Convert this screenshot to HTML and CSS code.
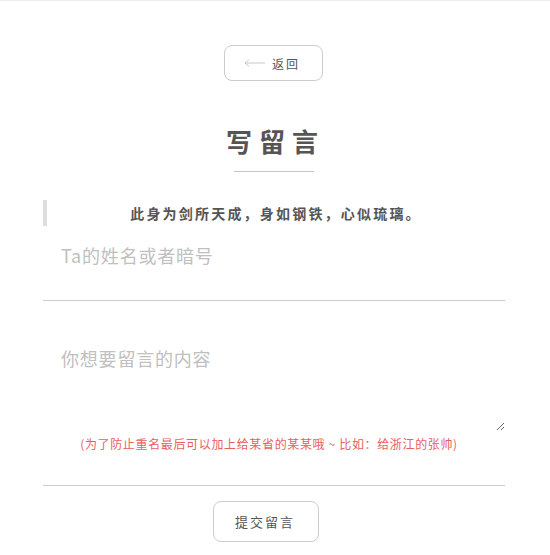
FILE: index.html
```html
<!DOCTYPE html>
<html lang="zh">
<head>
<meta charset="utf-8">
<link rel="stylesheet" href="styles.css">
</head>
<body>
<div class="page">
  <div class="top">
    <a class="back-btn" href="#">
      <svg class="arrow" width="22" height="10" viewBox="0 0 22 10"><path d="M1 5H21M1 5L5 1.5M1 5L5 8.5" fill="none" stroke="#c8c8c8" stroke-width="1"/></svg>
      <span>返回</span>
    </a>
  </div>
  <h1 class="title">写留言</h1>
  <div class="title-line"></div>
  <form class="form">
    <blockquote class="quote">此身为剑所天成，身如钢铁，心似琉璃。</blockquote>
    <input class="name-input" type="text" placeholder="Ta的姓名或者暗号">
    <textarea class="content-input" placeholder="你想要留言的内容"></textarea>
    <p class="hint">(为了防止重名最后可以加上给某省的某某哦 ~ 比如：给浙江的张帅)</p>
    <div class="divider"></div>
    <div class="actions">
      <button class="submit-btn" type="button">提交留言</button>
    </div>
  </form>
</div>
</body>
</html>
```
FILE: styles.css
```css
html, body {
  margin: 0;
  padding: 0;
  background: #fff;
}
body {
  font-family: "Noto Sans CJK SC", "Noto Sans", sans-serif;
  color: #555;
  border-top: 1px solid #eee;
  height: 554px;
  overflow: hidden;
}
.page {
  width: 462px;
  margin: 0 0 0 43px;
  padding-top: 44px;
}
.top {
  display: flex;
  justify-content: center;
  padding-right: 2px;
}
.back-btn {
  box-sizing: border-box;
  width: 99px;
  height: 36px;
  border: 1px solid #ccc;
  border-radius: 8px;
  display: flex;
  align-items: center;
  justify-content: center;
  gap: 6px;
  text-decoration: none;
  color: #555;
  font-size: 12px;
  letter-spacing: 2px;
  padding-right: 2px;
}
.arrow {
  display: block;
}
.title {
  margin: 42px 0 0;
  text-align: center;
  font-size: 26px;
  line-height: 36px;
  font-weight: 700;
  letter-spacing: 7px;
  padding-left: 3px;
  color: #555;
}
.title-line {
  width: 80px;
  height: 1px;
  background: #c4c4c4;
  margin: 12px auto 0;
}
.form {
  margin: 0;
}
.quote {
  margin: 28px 0 0;
  border-left: 4px solid #ddd;
  padding: 0;
  height: 26px;
  line-height: 26px;
  text-align: center;
  font-size: 14px;
  font-weight: 700;
  letter-spacing: 2.2px;
  color: #555;
}
.name-input, .content-input {
  display: block;
  box-sizing: border-box;
  width: 462px;
  border: none;
  outline: none;
  font-family: "Noto Sans CJK SC", "Noto Sans", sans-serif;
  font-size: 18px;
  letter-spacing: 0.8px;
  color: #555;
  background: transparent;
  padding: 0 18px;
}
.name-input {
  height: 75px;
  border-bottom: 1px solid #ccc;
  padding-bottom: 16px;
}
.content-input {
  height: 130px;
  padding-top: 44px;
  resize: vertical;
  line-height: 26px;
}
::placeholder {
  color: #c0c0c0;
}
.hint {
  margin: 3px 0 0;
  padding-right: 10px;
  text-align: center;
  font-size: 12px;
  line-height: 20px;
  letter-spacing: 0.65px;
  color: #e8605e;
}
.divider {
  height: 1px;
  background: #ccc;
  margin-top: 31px;
}
.actions {
  display: flex;
  justify-content: center;
  margin-top: 15px;
  padding-right: 16px;
}
.submit-btn {
  box-sizing: border-box;
  width: 106px;
  height: 41px;
  border: 1px solid #ccc;
  border-radius: 8px;
  background: #fff;
  font-family: "Noto Sans CJK SC", "Noto Sans", sans-serif;
  font-size: 13px;
  letter-spacing: 2px;
  color: #555;
  padding-left: 4px;
}
```
